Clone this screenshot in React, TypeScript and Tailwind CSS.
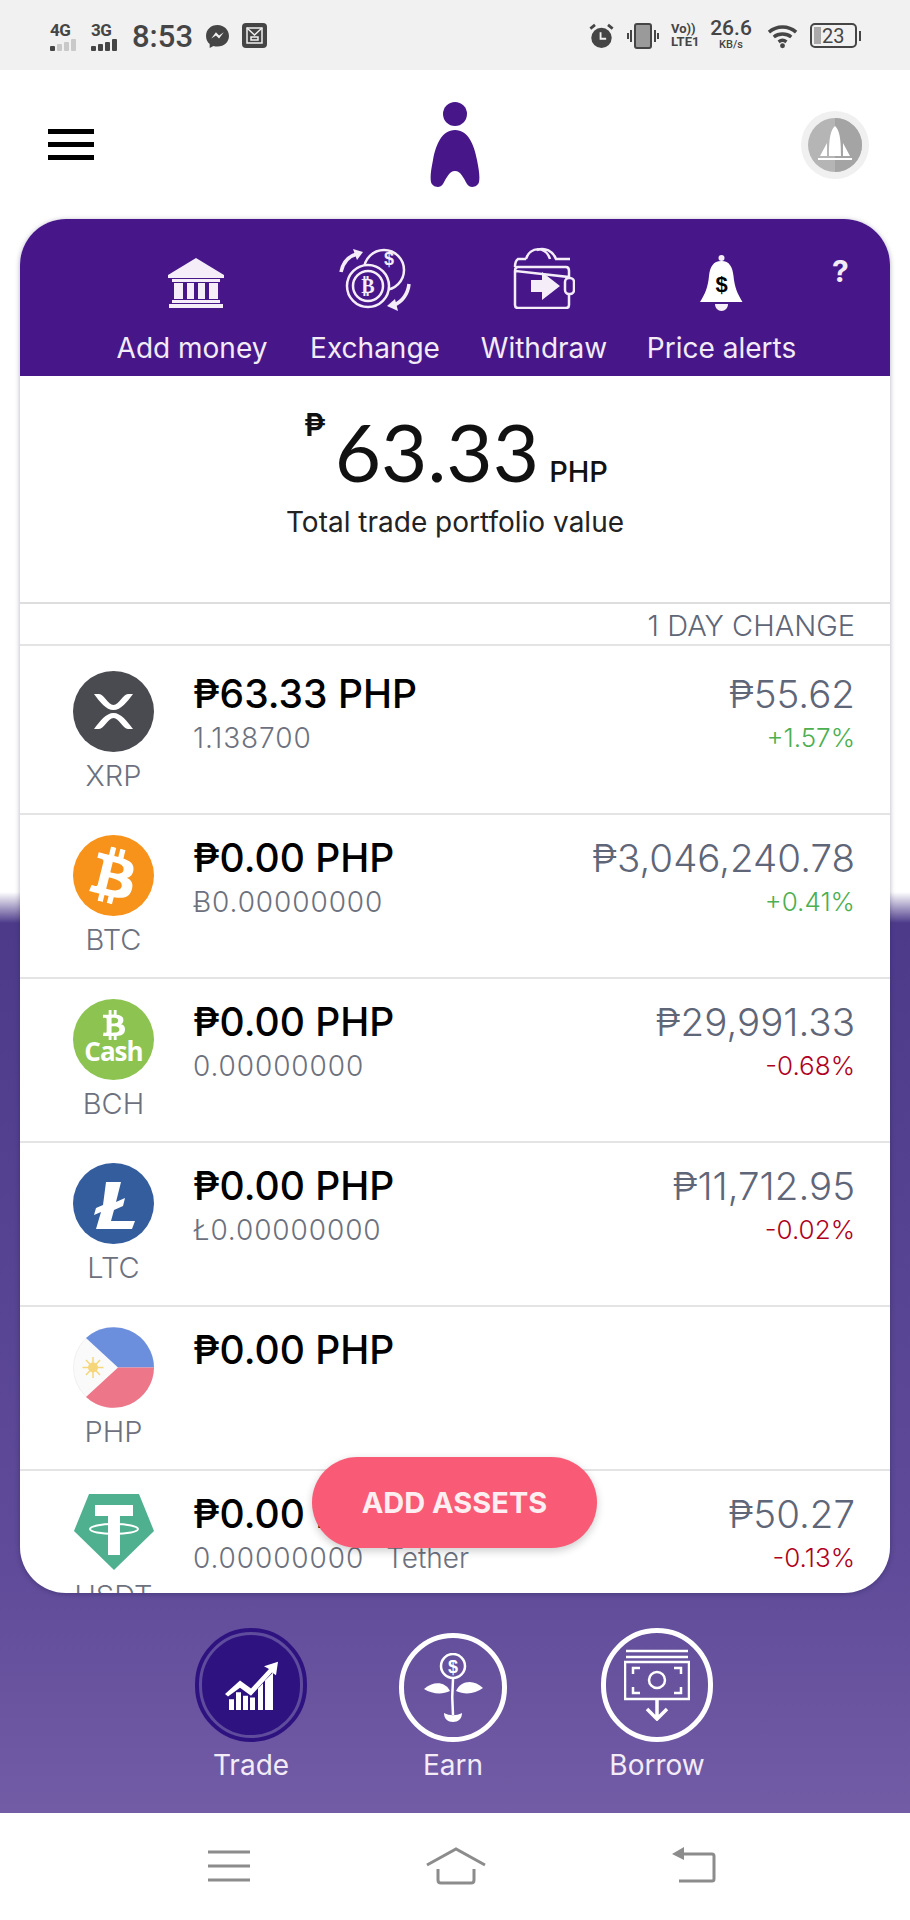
import { FaBtc } from 'react-icons/fa';

type Coin = {
  symbol: string;
  value: string;
  sub?: string;
  name?: string;
  price?: string;
  change?: string;
  up?: boolean;
  icon: React.ReactNode;
};

const XrpIcon = () => (
  <svg viewBox="0 0 81 81" className="h-[81px] w-[81px]">
    <circle cx="40.5" cy="40.5" r="40.5" fill="#4a4b50" />
    <path d="M21 23h5c5 0 9 11 14.500 11S50 23 55 23h5C54 31 48 39 40.500 39S27 31 21 23Z" fill="#fff" />
    <path d="M21 58h5c5 0 9-11 14.500-11S50 58 55 58h5C54 50 48 42 40.500 42S27 50 21 58Z" fill="#fff" />
  </svg>
);

const BtcIcon = () => (
  <div className="flex h-[81px] w-[81px] items-center justify-center rounded-full bg-[#f7931a]">
    <FaBtc className="h-[56px] w-[56px] rotate-[14deg] text-white" />
  </div>
);

const BchIcon = () => (
  <div className="flex h-[81px] w-[81px] flex-col items-center rounded-full bg-[#8dc351] pt-[11px] text-white">
    <FaBtc className="h-[30px] w-[30px]" />
    <span className="mt-[-3px] font-['Open_Sans',sans-serif] text-[26px] leading-[28px] font-bold tracking-[-1px]">Cash</span>
  </div>
);

const LtcIcon = () => (
  <svg viewBox="0 0 81 81" className="h-[81px] w-[81px]">
    <circle cx="40.5" cy="40.500" r="40.5" fill="#345d9d" />
    <path d="M33 19h15l-5 20 9-4-2 8-9 4-3 11h24l-3 8H23l5-17-7 3 2-7 7-3Z" fill="#fff" />
  </svg>
);

const PhpIcon = () => (
  <svg viewBox="0 0 81 81" className="h-[81px] w-[81px]">
    <circle cx="40.5" cy="40.5" r="40" fill="#fafafa" stroke="#f0f0f0" />
    <path d="M13 11A40.500 40.500 0 0 1 81 40.500H45Z" fill="#6c8fdd" />
    <path d="M13 70A40.500 40.500 0 0 0 81 40.500H45Z" fill="#ee7689" />
    <circle cx="20" cy="40.500" r="5" fill="#f5d67a" />
    <path d="M20 30v21M9.500 40.500h21M13 33l14 15M27 33 13 48" stroke="#f5d67a" strokeWidth="1.500" />
  </svg>
);

const UsdtIcon = () => (
  <svg viewBox="0 0 80 76" className="h-[76px] w-[80px]">
    <path d="M15 0h50l15 37-40 39L0 37Z" fill="#4fb08f" />
    <path d="M21 11h38v11H46v39H34V22H21Z" fill="#fff" />
    <ellipse cx="40" cy="35" rx="24" ry="5" fill="none" stroke="#fff" strokeWidth="2" />
  </svg>
);

const coins: Coin[] = [
  { symbol: 'XRP', value: '₱63.33 PHP', sub: '1.138700', price: '₱55.62', change: '+1.57%', up: true, icon: <XrpIcon /> },
  { symbol: 'BTC', value: '₱0.00 PHP', sub: 'Ƀ0.00000000', price: '₱3,046,240.78', change: '+0.41%', up: true, icon: <BtcIcon /> },
  { symbol: 'BCH', value: '₱0.00 PHP', sub: '0.00000000', price: '₱29,991.33', change: '-0.68%', icon: <BchIcon /> },
  { symbol: 'LTC', value: '₱0.00 PHP', sub: 'Ł0.00000000', price: '₱11,712.95', change: '-0.02%', icon: <LtcIcon /> },
  { symbol: 'PHP', value: '₱0.00 PHP', icon: <PhpIcon /> },
  { symbol: 'USDT', value: '₱0.00 PHP', sub: '0.00000000', name: 'Tether', price: '₱50.27', change: '-0.13%', icon: <UsdtIcon /> },
];

const SignalMark = ({ label, filled }: { label: string; filled: number }) => (
  <div className="flex w-[31px] flex-col">
    <span className="mt-[2px] text-[17px] leading-[17px] font-bold tracking-[-0.5px]">{label}</span>
    <div className="flex items-end gap-[2px]">
      {[5, 7, 9, 12].map((h, i) => (
        <div
          key={h}
          className={i < filled ? 'w-[5px] rounded-[1px] bg-[#454545]' : 'w-[5px] rounded-[1px] bg-[#c9c9c9]'}
          style={{ height: h }}
        />
      ))}
    </div>
  </div>
);

const StatusBar = () => (
  <div className="flex h-[70px] items-start justify-between bg-[#f1f1f1] pt-[20px] pr-[49px] pl-[50px] font-['Roboto',sans-serif] text-[#454545]">
    <div className="flex items-start">
      <SignalMark label="4G" filled={1} />
      <div className="w-[10px]" />
      <SignalMark label="3G" filled={4} />
      <span className="ml-[10px] text-[31px] leading-[34px] font-medium">8:53</span>
      <svg viewBox="0 0 24 24" className="mt-[4px] ml-[12px] h-[25px] w-[25px]">
        <path d="M12 1C5.500 1 1 5.500 1 11.500c0 3.200 1.300 5.900 3.500 7.700V23l3.600-2c1.200.4 2.500.6 3.900.6 6.500 0 11-4.500 11-10.100S18.500 1 12 1Z" fill="#454545" />
        <path d="m6 14 4.500-6 3 3 4.500-3-4.500 6-3-3Z" fill="#f1f1f1" />
      </svg>
      <svg viewBox="0 0 25 25" className="mt-[3px] ml-[12px] h-[25px] w-[25px]">
        <rect width="25" height="25" rx="4" fill="#454545" />
        <path d="M5 5h15v15H5Z" fill="none" stroke="#f1f1f1" strokeWidth="1.500" />
        <path d="m5 5 7.500 7L20 5M9 14h7v3H9Z" fill="none" stroke="#f1f1f1" strokeWidth="1.500" />
      </svg>
    </div>
    <div className="flex items-start">
      <svg viewBox="0 0 26 28" className="mt-[3px] h-[26px] w-[25px]">
        <circle cx="13" cy="16" r="11" fill="#454545" />
        <path d="M1 6l5-4M25 6l-5-4" stroke="#454545" strokeWidth="3" />
        <path d="M12 10v7h6" fill="none" stroke="#f1f1f1" strokeWidth="2" />
      </svg>
      <svg viewBox="0 0 32 26" className="mt-[3px] ml-[13px] h-[26px] w-[32px]">
        <rect x="8" y="1" width="16" height="24" rx="2" fill="#9a9a9a" stroke="#454545" strokeWidth="2" />
        <path d="M4 7v12M1 10v6M28 7v12M31 10v6" stroke="#454545" strokeWidth="2" />
      </svg>
      <div className="mt-[2px] ml-[12px] flex w-[30px] flex-col text-[13px] leading-[13px] font-bold">
        <span>Vo))</span>
        <span>LTE1</span>
      </div>
      <div className="ml-[9px] flex w-[42px] flex-col items-center">
        <span className="mt-[-3px] text-[21px] leading-[22px] font-medium">26.6</span>
        <span className="text-[11px] leading-[12px] font-medium">KB/s</span>
      </div>
      <svg viewBox="0 0 34 26" className="mt-[3px] ml-[15px] h-[26px] w-[33px]">
        <path d="M2 9c8-7 20-7 28 0M7 14c5-4 13-4 18 0M12 19c2.500-2 5.500-2 8 0" fill="none" stroke="#454545" strokeWidth="3.500" />
        <circle cx="16" cy="23" r="2.500" fill="#454545" />
      </svg>
      <div className="mt-[3px] ml-[10px] flex items-center">
        <div className="flex h-[25px] w-[47px] items-center rounded-[5px] border-2 border-[#454545] pl-[2px]">
          <div className="h-[17px] w-[7px] bg-[#aaaaaa]" />
          <span className="ml-[1px] text-[20px] leading-[20px]">23</span>
        </div>
        <div className="ml-[2px] h-[10px] w-[2px] bg-[#454545]" />
      </div>
    </div>
  </div>
);

const Header = () => (
  <div className="flex h-[149px] items-start justify-between pr-[40px] pl-[48px]">
    <div className="mt-[59px] flex w-[46px] flex-col gap-[8px]">
      <div className="h-[5px] bg-black" />
      <div className="h-[5px] bg-black" />
      <div className="h-[5px] bg-black" />
    </div>
    <svg viewBox="0 0 50 86" className="mt-[32px] ml-[16px] h-[86px] w-[50px]">
      <ellipse cx="25" cy="12" rx="12" ry="12" fill="#47178a" />
      <path d="M25 28c13 0 19 14 22 30 2 10 3 17 2 22-1 5-9 7-12 2-3-5-6-13-12-13s-9 8-12 13c-3 5-11 3-12-2-1-5 0-12 2-22C6 42 12 28 25 28Z" fill="#47178a" />
    </svg>
    <svg viewBox="0 0 70 70" className="mt-[40px] h-[70px] w-[70px]">
      <circle cx="35" cy="35" r="34" fill="#f0f0f0" />
      <circle cx="35" cy="35" r="27" fill="#b5b5b5" />
      <path d="M35 8a27 27 0 0 1 0 54Z" fill="#a4a4a4" />
      <path d="M35 16c4 4 6 10 6 30H29c0-20 2-26 6-30ZM27 33v13h-7ZM43 33v13h7Z" fill="#fff" />
      <path d="M18 48h34v2H18Z" fill="#fff" />
    </svg>
  </div>
);

const BankIcon = () => (
  <svg viewBox="0 0 56 50" className="ml-[8px] h-[50px] w-[56px]">
    <path d="M28 0 56 17v3H0v-3Z" fill="#f5eef8" />
    <path d="M4 21h48v3H4ZM6 25h9v16H6ZM19 25h7v16h-7ZM30 25h7v16h-7ZM41 25h9v16h-9ZM4 42h48v3H4ZM1 46h54v4H1Z" fill="#f5eef8" />
  </svg>
);

const ExchangeIcon = () => (
  <svg viewBox="0 0 72 64" className="h-[64px] w-[72px]" fill="none" stroke="#f5eef8" strokeWidth="2.500">
    <circle cx="45" cy="22" r="20" />
    <circle cx="29" cy="38" r="21" fill="#47178a" />
    <circle cx="29" cy="38" r="15" />
    <path d="M2 24C4 14 10 8 18 6" strokeWidth="3.500" />
    <path d="m14 1 10 3-6 8Z" fill="#f5eef8" stroke="none" />
    <path d="M70 36c-1 10-7 18-15 21" strokeWidth="3.500" />
    <path d="m59 63-11-5 8-7Z" fill="#f5eef8" stroke="none" />
    <text x="50" y="17" fontSize="18" fontWeight="700" fill="#f5eef8" stroke="none" textAnchor="middle" fontFamily="Liberation Sans">$</text>
    <text x="29" y="45" fontSize="20" fontWeight="700" fill="#f5eef8" stroke="none" textAnchor="middle" fontFamily="DejaVu Sans">₿</text>
  </svg>
);

const WithdrawIcon = () => (
  <svg viewBox="0 0 62 62" className="h-[62px] w-[62px]" fill="none" stroke="#f5eef8" strokeWidth="2.500">
    <path d="M2 24V58q0 3 3 3h48q3 0 3-3V48M56 30V24q0-4-3-4H5q-3 0-3 4Z" />
    <path d="M2 20q0-6 3-8h8M13 12C17-1 33-1 37 12M24 3c8-3 16 1 19 9h14" />
    <path d="M18 33h11v-8l18 14-18 14v-8H18Z" fill="#f5eef8" stroke="none" />
    <rect x="52" y="31" width="9" height="16" rx="4" />
  </svg>
);

const BellIcon = () => (
  <svg viewBox="0 0 43 56" className="h-[56px] w-[43px]">
    <circle cx="21.5" cy="3" r="3" fill="#f5eef8" />
    <path d="M21.500 6c8 0 11 6 12 15 1 11 4 18 9 26H0c5-8 8-15 9-26 1-9 4-15 12.500-15Z" fill="#fff" />
    <path d="M15 49h13c0 4-3 7-6.500 7S15 53 15 49Z" fill="#f5eef8" />
    <text x="21.500" y="37" fontSize="22" fontWeight="700" fill="#000" textAnchor="middle" fontFamily="Liberation Sans">$</text>
  </svg>
);

const ActionItem = ({ label, icon, width, iconBox }: { label: string; icon: React.ReactNode; width: string; iconBox: string }) => (
  <div className={`flex flex-col items-center ${width}`}>
    <div className={`flex items-start justify-center ${iconBox}`}>{icon}</div>
    <span className="text-[28px] leading-[34px] whitespace-nowrap text-[#f3ecf7]">{label}</span>
  </div>
);

const ActionBar = () => (
  <div className="flex h-[157px] gap-[41px] bg-[#47178a] pl-[95px]">
    <ActionItem label="Add money" icon={<BankIcon />} width="w-[154px]" iconBox="h-[112px] pt-[39px]" />
    <ActionItem label="Exchange" icon={<ExchangeIcon />} width="w-[130px]" iconBox="h-[112px] pt-[29px]" />
    <ActionItem label="Withdraw" icon={<WithdrawIcon />} width="w-[126px]" iconBox="h-[112px] pt-[28px]" />
    <ActionItem label="Price alerts" icon={<BellIcon />} width="w-[147px]" iconBox="h-[112px] pt-[36px]" />
    <span className="ml-[-4px] pt-[35px] text-[30px] leading-[34px] font-bold text-[#f3ecf7]">?</span>
  </div>
);

const Portfolio = () => (
  <div className="flex h-[228px] flex-col items-center border-b-2 border-[#dedede] pt-[27px] text-[#111]">
    <div className="ml-[2px] flex items-start">
      <span className="mt-[7px] mr-[9px] text-[31px] leading-[30px] font-semibold">₱</span>
      <span className="font-['Lato',sans-serif] text-[80px] leading-[96px]">63.33</span>
      <span className="mt-[52px] ml-[10px] text-[29px] leading-[34px] font-medium">PHP</span>
    </div>
    <span className="mt-[5px] text-[28px] leading-[36px] text-[#222]">Total trade portfolio value</span>
  </div>
);

const CoinRow = ({ coin, first }: { coin: Coin; first: boolean }) => (
  <div className={first ? 'flex h-[169px] shrink-0 border-b-2 border-[#e4e4e4] pt-[25px] pr-[35px]' : 'flex h-[164px] shrink-0 border-b-2 border-[#e4e4e4] pt-[20px] pr-[35px]'}>
    <div className="ml-[53px] flex w-[81px] flex-col items-center">
      <div className="flex h-[81px] items-center">{coin.icon}</div>
      <span className="mt-[8px] text-[29px] leading-[32px] font-light text-[#6d717e]">{coin.symbol}</span>
    </div>
    <div className="ml-[39px] flex flex-col">
      <span className="text-[39px] leading-[46px] font-medium text-black">{coin.value}</span>
      {coin.sub && (
        <span className="mt-[5px] text-[28px] leading-[32px] font-light tracking-[0.9px] text-[#6d717e]">
          {coin.sub}
          {coin.name && <span className="ml-[22px] tracking-normal">{coin.name}</span>}
        </span>
      )}
    </div>
    {coin.price && (
      <div className="ml-auto flex flex-col items-end">
        <span className="text-[38.5px] leading-[46px] font-light text-[#5f6678]">{coin.price}</span>
        <span className={coin.up ? 'mt-[5px] text-[26px] leading-[32px] font-light text-[#4caf50]' : 'mt-[5px] text-[26px] leading-[32px] font-light text-[#b00020]'}>{coin.change}</span>
      </div>
    )}
  </div>
);

const TradeIcon = () => (
  <svg viewBox="0 0 56 56" preserveAspectRatio="none" className="h-[50px] w-[56px]" fill="#fff">
    <path d="M2 38 17 23l11 9L46 10l-5-3 14-5-2 15-4-3-21 26-11-9L5 41Z" />
    <path d="M6 44h5v12H6ZM13 36h5v20h-5ZM20 40h5v16h-5ZM27 42h5v14h-5ZM35 32l5-6v30h-5ZM42 23l8-9v42h-8Z" />
  </svg>
);

const EarnIcon = () => (
  <svg viewBox="0 0 60 70" className="h-[70px] w-[60px]">
    <circle cx="30" cy="13" r="12" fill="none" stroke="#fff" strokeWidth="2.500" />
    <text x="30" y="20" fontSize="18" fontWeight="700" fill="#fff" textAnchor="middle" fontFamily="Liberation Sans">$</text>
    <path d="M30 26c-1 12-1 24 0 36" fill="none" stroke="#fff" strokeWidth="2.500" />
    <path d="M27 38C22 28 10 28 1 36c8 5 18 6 26 2Z" fill="#fff" />
    <path d="M33 38c5-11 18-12 27-3-8 6-18 7-27 3Z" fill="#fff" />
    <path d="M21 60c6 3 12 3 18 0 0 6-4 9-9 9s-9-3-9-9Z" fill="#fff" />
  </svg>
);

const BorrowIcon = () => (
  <svg viewBox="0 0 66 72" className="h-[72px] w-[66px]" fill="none" stroke="#fff" strokeWidth="2.500">
    <path d="M2 2h62M2 8h62" />
    <rect x="1" y="13" width="64" height="37" />
    <circle cx="33" cy="31" r="8" />
    <path d="M9 25v-6h7M57 25v-6h-7M9 38v6h7M57 38v6h-7" />
    <path d="M33 50v20M23 60l10 10 10-10" strokeWidth="3.500" />
  </svg>
);

const Tabs = () => (
  <div className="relative flex flex-1 pt-[35px] pl-[195px]">
    <div className="flex w-[112px] flex-col items-center">
      <div className="flex h-[114px] w-[112px] items-center justify-center rounded-full border-[5px] border-[#2e1380] bg-[#2e1380] outline-[3px] -outline-offset-[7px] outline-[#5f4c9c]">
        <TradeIcon />
      </div>
      <span className="mt-[6px] text-[28px] leading-[34px] text-[#f3ecf7]">Trade</span>
    </div>
    <div className="ml-[92px] flex w-[108px] flex-col items-center pt-[5px]">
      <div className="flex h-[109px] w-[108px] items-center justify-center rounded-full border-[5px] border-white">
        <EarnIcon />
      </div>
      <span className="mt-[6px] text-[28px] leading-[34px] text-[#f3ecf7]">Earn</span>
    </div>
    <div className="ml-[94px] flex w-[112px] flex-col items-center">
      <div className="flex h-[114px] w-[112px] items-center justify-center rounded-full border-[5px] border-white">
        <BorrowIcon />
      </div>
      <span className="mt-[6px] text-[28px] leading-[34px] text-[#f3ecf7]">Borrow</span>
    </div>
  </div>
);

const NavBar = () => (
  <div className="flex h-[107px] items-start bg-white pt-[34px] pl-[207px]">
    <svg viewBox="0 0 44 34" className="mt-[2px] h-[34px] w-[44px]" fill="none" stroke="#8c8c8c" strokeWidth="3">
      <path d="M1 3h42M1 17h42M1 31h42" />
    </svg>
    <svg viewBox="0 0 60 38" className="ml-[175px] h-[38px] w-[60px]" fill="none" stroke="#8c8c8c" strokeWidth="3">
      <path d="M1 18 30 2l29 16" />
      <path d="M12 22v11q0 3 3 3h30q3 0 3-3V22" />
    </svg>
    <svg viewBox="0 0 44 36" className="ml-[186px] h-[36px] w-[44px]" fill="none" stroke="#8c8c8c" strokeWidth="3">
      <path d="M6 7h34q2 0 2 2v23q0 2-2 2H7" />
      <path d="M12 0v13L0 7Z" fill="#8c8c8c" stroke="none" />
    </svg>
  </div>
);

export default function App() {
  return (
    <div className="flex h-[1920px] w-[910px] flex-col overflow-hidden font-['Inter','DejaVu_Sans',sans-serif]">
      <StatusBar />
      <div className="flex flex-1 flex-col bg-[linear-gradient(to_bottom,#ffffff_822px,#4d3b8a_853px,#5f4b99_1500px,#735ca6_100%)]">
        <Header />
        <div className="mx-[20px]">
          <div className="relative h-[1374px] overflow-hidden rounded-[46px] bg-white shadow-[0_1px_5px_rgba(30,20,70,0.35)]">
            <ActionBar />
            <Portfolio />
            <div className="flex h-[42px] items-center justify-end border-b-2 border-[#e4e4e4] pt-[3px] pr-[35px] text-[29px] leading-[32px] font-light text-[#5f6678]">1 DAY CHANGE</div>
            <div className="flex flex-col">
              {coins.map((coin, i) => (
                <CoinRow key={coin.symbol} coin={coin} first={i === 0} />
              ))}
            </div>
            <button className="absolute top-[1238px] left-[292px] h-[91px] w-[285px] rounded-full bg-[#f95a75] text-[29px] font-bold text-[#fdeef1] shadow-[0_3px_8px_rgba(0,0,0,0.2)]">
              ADD ASSETS
            </button>
          </div>
        </div>
        <Tabs />
      </div>
      <NavBar />
    </div>
  );
}
